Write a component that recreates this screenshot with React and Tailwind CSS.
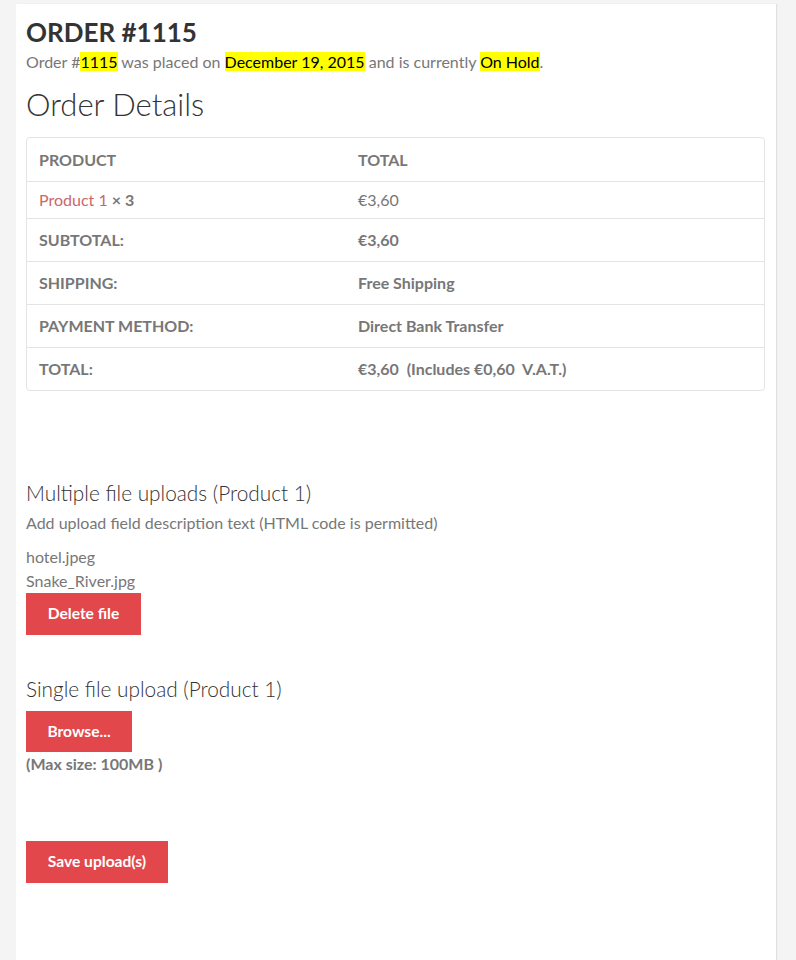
import React from "react"

const rows = [
  { label: "SUBTOTAL:", value: "€3,60" },
  { label: "SHIPPING:", value: "Free Shipping" },
  { label: "PAYMENT METHOD:", value: "Direct Bank Transfer" },
  { label: "TOTAL:", value: "€3,60\u00a0 (Includes €0,60\u00a0 V.A.T.)" },
]

function Mark({ children }) {
  return <mark className="bg-[#ffff00] text-black">{children}</mark>
}

function RedButton({ children, className = "" }) {
  return (
    <button
      className={
        "bg-[#e2474b] text-white font-bold text-[15.6px] leading-none " +
        className
      }
    >
      {children}
    </button>
  )
}

export default function App() {
  return (
    <div
      className="min-h-[960px] bg-[#f4f4f4] pt-[4px] pl-[16px] pr-[20px]"
      style={{ fontFamily: "Lato, 'Open Sans', sans-serif" }}
    >
      <div className="bg-white w-[760px] min-h-[956px] px-[10px] pt-[12px] shadow-[1px_0_1px_rgba(0,0,0,0.08)]">
        <h2 className="text-[26px] font-bold text-[#333] leading-[32px]">
          ORDER #1115
        </h2>
        <p className="text-[16px] text-[#777] leading-[20px] mt-[4px]">
          Order #<Mark>1115</Mark> was placed on <Mark>December 19, 2015</Mark>{" "}
          and is currently <Mark>On Hold</Mark>.
        </p>

        <h2 className="text-[31px] font-light text-[#333] leading-[40px] mt-[12px]">
          Order Details
        </h2>

        {/* order summary table */}
        <div className="mt-[13px] w-[739px] border border-[#e4e4e4] rounded-[4px] text-[16px] text-[#777]">
          <div className="grid grid-cols-[319px_1fr] h-[43px] items-center font-bold">
            <div className="pl-[12px]">PRODUCT</div>
            <div className="pl-[12px]">TOTAL</div>
          </div>
          <div className="grid grid-cols-[319px_1fr] h-[37px] items-center border-t border-[#e4e4e4]">
            <div className="pl-[12px]">
              <a className="text-[#cd6669]">Product 1</a>{" "}
              <strong className="font-bold">× 3</strong>
            </div>
            <div className="pl-[12px]">€3,60</div>
          </div>
          {rows.map((r) => (
            <div
              key={r.label}
              className="grid grid-cols-[319px_1fr] h-[43px] items-center border-t border-[#e4e4e4] font-bold"
            >
              <div className="pl-[12px]">{r.label}</div>
              <div className="pl-[12px]">{r.value}</div>
            </div>
          ))}
        </div>

        {/* uploads */}
        <h3 className="mt-[88px] text-[20.8px] font-light text-[#333] leading-[28px]">
          Multiple file uploads (Product 1)
        </h3>
        <p className="text-[16px] text-[#777] leading-[20px] mt-[6px]">
          Add upload field description text (HTML code is permitted)
        </p>
        <div className="mt-[12px] text-[16px] text-[#777] leading-[24px]">
          <div>hotel.jpeg</div>
          <div>Snake_River.jpg</div>
        </div>
        <RedButton className="w-[115px] h-[42px]">Delete file</RedButton>

        <h3 className="mt-[40px] text-[20.8px] font-light text-[#333] leading-[28px]">
          Single file upload (Product 1)
        </h3>
        <RedButton className="mt-[8px] w-[106px] h-[41px]">Browse...</RedButton>
        <p className="text-[16px] font-bold text-[#777] leading-[20px] mt-[2px]">
          (Max size: 100MB )
        </p>

        <RedButton className="mt-[67px] w-[142px] h-[42px]">
          Save upload(s)
        </RedButton>
      </div>
    </div>
  )
}
